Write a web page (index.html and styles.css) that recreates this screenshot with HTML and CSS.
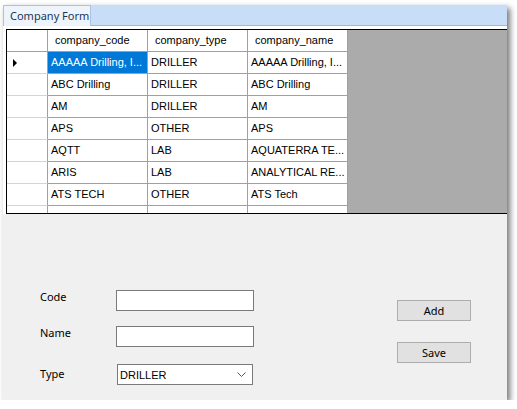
FILE: index.html
```html
<!DOCTYPE html>
<html>
<head>
<meta charset="utf-8">
<link rel="stylesheet" href="styles.css">
</head>
<body>
<div class="window">
  <div class="tabstrip"><div class="tab">Company Form</div></div>
  <div class="page">
    <div class="grid">
      <div class="row head">
        <div class="rh"></div>
        <div class="c">company_code</div>
        <div class="c">company_type</div>
        <div class="c">company_name</div>
      </div>
      <div class="row">
        <div class="rh"><span class="arrow"></span></div>
        <div class="c sel">AAAAA Drilling, I...</div>
        <div class="c">DRILLER</div>
        <div class="c">AAAAA Drilling, I...</div>
      </div>
      <div class="row">
        <div class="rh"></div>
        <div class="c">ABC Drilling</div>
        <div class="c">DRILLER</div>
        <div class="c">ABC Drilling</div>
      </div>
      <div class="row">
        <div class="rh"></div>
        <div class="c">AM</div>
        <div class="c">DRILLER</div>
        <div class="c">AM</div>
      </div>
      <div class="row">
        <div class="rh"></div>
        <div class="c">APS</div>
        <div class="c">OTHER</div>
        <div class="c">APS</div>
      </div>
      <div class="row">
        <div class="rh"></div>
        <div class="c">AQTT</div>
        <div class="c">LAB</div>
        <div class="c">AQUATERRA TE...</div>
      </div>
      <div class="row">
        <div class="rh"></div>
        <div class="c">ARIS</div>
        <div class="c">LAB</div>
        <div class="c">ANALYTICAL RE...</div>
      </div>
      <div class="row">
        <div class="rh"></div>
        <div class="c">ATS TECH</div>
        <div class="c">OTHER</div>
        <div class="c">ATS Tech</div>
      </div>
      <div class="row">
        <div class="rh"></div>
        <div class="c"></div>
        <div class="c"></div>
        <div class="c"></div>
      </div>
    </div>
  </div>
  <div class="form">
    <div class="fields">
      <div class="frow">
        <label class="lbl">Code</label>
        <div class="input"></div>
      </div>
      <div class="frow r2">
        <label class="lbl">Name</label>
        <div class="input"></div>
      </div>
      <div class="frow r3">
        <label class="lbl type">Type</label>
        <div class="select">
          <span>DRILLER</span>
          <svg class="chev" width="9" height="6" viewBox="0 0 9 6"><polyline points="0.5,0.5 4.5,4.5 8.5,0.5" fill="none" stroke="#555" stroke-width="1"/></svg>
        </div>
      </div>
    </div>
    <div class="buttons">
      <div class="btn">Add</div>
      <div class="btn save">Save</div>
    </div>
  </div>
</div>
</body>
</html>
```
FILE: styles.css
```css
html, body {
  margin: 0;
  background: #ffffff;
}
body {
  font-family: "Liberation Sans", Arial, sans-serif;
  font-size: 11px;
  color: #000;
}
.window {
  margin: 5px 0 0 3px;
  width: 504px;
  height: 395px;
  background: #f0f0f0;
  box-shadow: 3px 3px 6px rgba(0, 0, 0, 0.55);
  display: flex;
  flex-direction: column;
}
.tabstrip {
  height: 21px;
  box-sizing: border-box;
  background: #c8ddf7;
  border-bottom: 1px solid #9db8db;
  display: flex;
  align-items: flex-end;
}
.tab {
  width: 88px;
  height: 21px;
  box-sizing: border-box;
  background: #edf4fc;
  border: 1px solid #aac3e3;
  border-bottom: none;
  margin-bottom: -1px;
  font-family: "Noto Sans", "Open Sans", sans-serif;
  font-size: 11px;
  line-height: 19px;
  color: #1d3557;
  padding-left: 6px;
  white-space: nowrap;
}
.page {
  background: #ffffff;
  padding: 3px 0 0 3px;
}
.grid {
  height: 185px;
  box-sizing: border-box;
  border: 1px solid #000;
  border-right: none;
  background: #ababab;
  overflow: hidden;
}
.row {
  display: flex;
  height: 22px;
  flex-shrink: 0;
}
.rh, .c {
  box-sizing: border-box;
  height: 22px;
  background: #fff;
  border-right: 1px solid #a0a0a0;
  border-bottom: 1px solid #a0a0a0;
  white-space: nowrap;
  overflow: hidden;
  line-height: 21px;
}
.rh {
  width: 41px;
  display: flex;
  align-items: center;
  padding-left: 6px;
  border-bottom-color: #d4d4d4;
}
.head .rh {
  border-bottom-color: #a0a0a0;
}
.c {
  width: 100px;
  padding-left: 3px;
}
.head .c {
  padding-left: 7px;
}
.c.sel {
  background: #0078d7;
  color: #fff;
  border-right-color: #a0a0a0;
}
.arrow {
  width: 0;
  height: 0;
  border-left: 4px solid #000;
  border-top: 4px solid transparent;
  border-bottom: 4px solid transparent;
}
.form {
  flex: 1;
  display: flex;
  padding: 76px 0 0 37px;
  font-family: "Noto Sans", "Open Sans", sans-serif;
  font-size: 11px;
}
.fields {
  display: flex;
  flex-direction: column;
}
.frow {
  display: flex;
  align-items: flex-start;
}
.r2 {
  margin-top: 15px;
}
.r3 {
  margin-top: 17px;
}
.lbl {
  width: 76px;
  line-height: 14px;
  color: #000;
}
.lbl.type {
  margin-top: 3px;
}
.input {
  width: 138px;
  height: 21px;
  box-sizing: border-box;
  border: 1px solid #7a7a7a;
  background: #fff;
}
.select {
  margin-left: 1px;
  width: 136px;
  height: 21px;
  box-sizing: border-box;
  border: 1px solid #7a7a7a;
  background: #fff;
  display: flex;
  align-items: center;
  justify-content: space-between;
  padding: 0 6px 0 2px;
  font-family: "Liberation Sans", Arial, sans-serif;
  font-size: 11px;
}
.chev {
  display: block;
}
.buttons {
  margin-left: 143px;
  margin-top: 10px;
  display: flex;
  flex-direction: column;
}
.btn {
  width: 74px;
  height: 21px;
  box-sizing: border-box;
  background: #e1e1e1;
  border: 1px solid #adadad;
  text-align: center;
  line-height: 19px;
  color: #000;
}
.btn.save {
  margin-top: 21px;
}
```
